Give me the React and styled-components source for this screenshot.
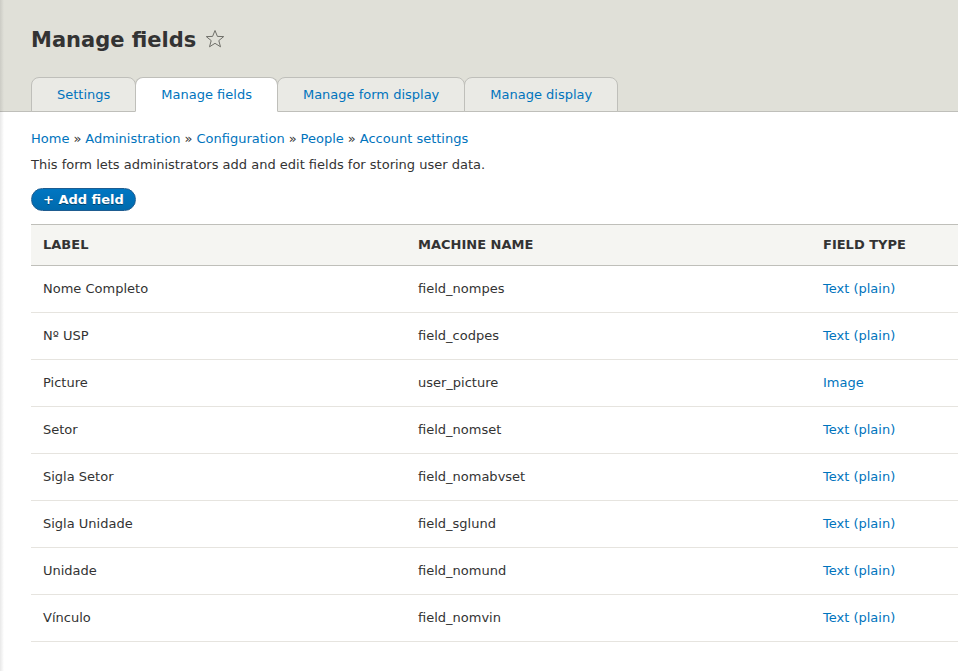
import React from "react";
import styled, { createGlobalStyle } from "styled-components";

const fields = [
  { label: "Nome Completo", machine: "field_nompes", type: "Text (plain)" },
  { label: "Nº USP", machine: "field_codpes", type: "Text (plain)" },
  { label: "Picture", machine: "user_picture", type: "Image" },
  { label: "Setor", machine: "field_nomset", type: "Text (plain)" },
  { label: "Sigla Setor", machine: "field_nomabvset", type: "Text (plain)" },
  { label: "Sigla Unidade", machine: "field_sglund", type: "Text (plain)" },
  { label: "Unidade", machine: "field_nomund", type: "Text (plain)" },
  { label: "Vínculo", machine: "field_nomvin", type: "Text (plain)" },
];

const tabs = ["Settings", "Manage fields", "Manage form display", "Manage display"];
const crumbs = ["Home", "Administration", "Configuration", "People", "Account settings"];

const App = () => {
  return (
    <Page>
      <GlobalStyle />
      <Header>
        <Title>
          Manage fields
          <Star viewBox="0 0 20 20" aria-hidden="true">
            <polygon
              points="10,1.5 12.4,7.4 18.7,7.6 13.8,11.6 15.5,17.8 10,14.3 4.5,17.8 6.2,11.6 1.3,7.6 7.6,7.4"
              fill="none"
              stroke="#6f6f69"
              strokeWidth="1"
              strokeLinejoin="round"
            />
          </Star>
        </Title>
        <Tabs>
          {tabs.map((t) => (
            <Tab key={t} $active={t === "Manage fields"}>
              <a href="#">{t}</a>
            </Tab>
          ))}
        </Tabs>
      </Header>
      <Content>
        <Breadcrumb>
          {crumbs.map((c, i) => (
            <React.Fragment key={c}>
              {i > 0 && <Sep>»</Sep>}
              <a href="#">{c}</a>
            </React.Fragment>
          ))}
        </Breadcrumb>
        <Description>This form lets administrators add and edit fields for storing user data.</Description>
        <AddButton type="button">+ Add field</AddButton>
        <Table>
          <thead>
            <tr>
              <Th $width="351px">Label</Th>
              <Th $width="381px">Machine name</Th>
              <Th>Field type</Th>
            </tr>
          </thead>
          <tbody>
            {fields.map((f) => (
              <tr key={f.machine}>
                <Td>{f.label}</Td>
                <Td>{f.machine}</Td>
                <Td>
                  <a href="#">{f.type}</a>
                </Td>
              </tr>
            ))}
          </tbody>
        </Table>
      </Content>
    </Page>
  );
};

const GlobalStyle = createGlobalStyle`
  html, body {
    margin: 0;
    padding: 0;
    background: #fff;
    overflow: hidden;
  }
  body {
    font-family: "DejaVu Sans", Verdana, sans-serif;
    font-size: 13px;
    color: #333;
  }
  a {
    color: #0074bd;
    text-decoration: none;
  }
`;

const Page = styled.div`
  position: relative;
  min-height: 671px;
  &::before {
    content: "";
    position: absolute;
    top: 0;
    bottom: 0;
    left: 0;
    width: 4px;
    background: linear-gradient(to right, rgba(0, 0, 0, 0.09), rgba(0, 0, 0, 0));
    z-index: 2;
  }
`;

const Header = styled.header`
  background: #e0e0d8;
  border-bottom: 1px solid #bfbfba;
  padding: 26px 0 0 31px;
`;

const Title = styled.h1`
  display: flex;
  align-items: center;
  gap: 9px;
  margin: 0 0 23px;
  font-size: 21px;
  font-weight: bold;
  line-height: 28px;
  color: #333;
`;

const Star = styled.svg`
  width: 20px;
  height: 20px;
  margin-top: -2px;
`;

const Tabs = styled.ul`
  display: flex;
  list-style: none;
  margin: 0 0 -1px;
  padding: 0;
`;

const Tab = styled.li`
  margin-left: -1px;
  &:first-child {
    margin-left: 0;
  }
  a {
    display: block;
    height: 33px;
    line-height: 33px;
    padding: 0 25px;
    background: ${(p) => (p.$active ? "#fff" : "#eaeae5")};
    border: 1px solid #bfbfba;
    border-bottom: ${(p) => (p.$active ? "1px solid #fff" : "1px solid #bfbfba")};
    border-radius: 8px 8px 0 0;
    position: relative;
    z-index: ${(p) => (p.$active ? 1 : 0)};
    color: #0074bd;
  }
`;

const Content = styled.main`
  padding: 19px 0 0 31px;
`;

const Breadcrumb = styled.nav`
  line-height: 15px;
  margin: 0 0 11px;
`;

const Sep = styled.span`
  margin: 0 4px;
  color: #333;
`;

const Description = styled.p`
  margin: 0 0 16px;
  line-height: 15px;
`;

const AddButton = styled.button`
  display: block;
  height: 23px;
  padding: 0 11px;
  border: 1px solid #1e5c90;
  border-radius: 20px;
  background: linear-gradient(to bottom, #0076c2, #006aad);
  color: #fff;
  font-family: "DejaVu Sans", Verdana, sans-serif;
  font-size: 13px;
  font-weight: bold;
  line-height: 21px;
  text-shadow: 0 1px 0 rgba(0, 0, 0, 0.4);
  margin: 0 0 13px;
  cursor: pointer;
`;

const Table = styled.table`
  width: 100%;
  border-collapse: collapse;
`;

const Th = styled.th`
  width: ${(p) => p.$width || "auto"};
  height: 38px;
  padding: 0 12px 2px;
  background: #f5f5f2;
  border-top: 1px solid #bfbfba;
  border-bottom: 1px solid #bfbfba;
  text-align: left;
  text-transform: uppercase;
  white-space: nowrap;
  font-size: 13px;
  font-weight: bold;
  color: #333;
`;

const Td = styled.td`
  height: 44px;
  padding: 0 12px 2px;
  border-bottom: 1px solid #e6e4df;
  color: #333;
`;

export default App;
